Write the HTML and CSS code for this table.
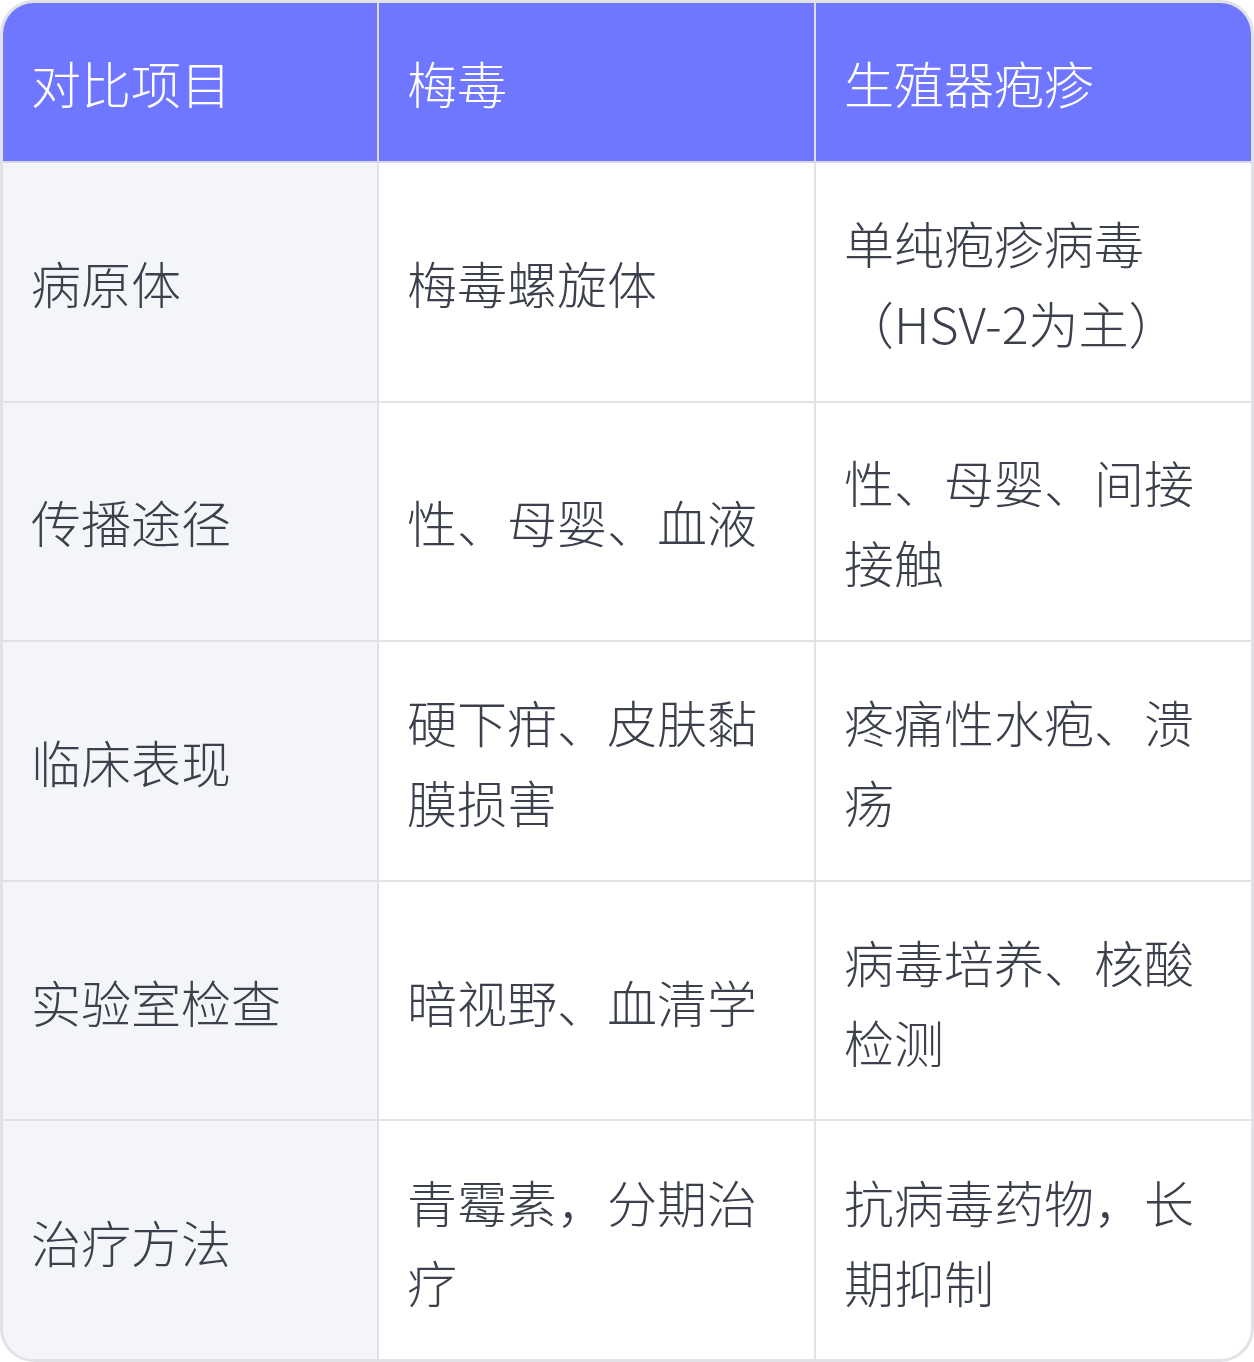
FILE: index.html
```html
<!DOCTYPE html>
<html lang="zh-CN">
<head>
<meta charset="utf-8">
<title>梅毒与生殖器疱疹对比</title>
<link rel="stylesheet" href="styles.css">
</head>
<body>
<div class="card">
  <table class="cmp">
    <colgroup>
      <col class="c1"><col class="c2"><col class="c3">
    </colgroup>
    <thead>
      <tr><th>对比项目</th><th>梅毒</th><th>生殖器疱疹</th></tr>
    </thead>
    <tbody>
      <tr><td>病原体</td><td>梅毒螺旋体</td><td>单纯疱疹病毒（HSV-2为主）</td></tr>
      <tr><td>传播途径</td><td>性、母婴、血液</td><td>性、母婴、间接接触</td></tr>
      <tr><td>临床表现</td><td>硬下疳、皮肤黏膜损害</td><td>疼痛性水疱、溃疡</td></tr>
      <tr><td>实验室检查</td><td>暗视野、血清学</td><td>病毒培养、核酸检测</td></tr>
      <tr><td>治疗方法</td><td>青霉素，分期治疗</td><td>抗病毒药物，长期抑制</td></tr>
    </tbody>
  </table>
</div>
</body>
</html>
```
FILE: styles.css
```css
html, body {
  margin: 0;
  padding: 0;
  background: #ffffff;
}
.card {
  width: 1254px;
  height: 1362px;
  box-sizing: border-box;
  border: 3px solid #e1e2e6;
  border-radius: 34px;
  overflow: hidden;
  background: #ffffff;
}
.cmp {
  width: 1248px;
  border-collapse: separate;
  border-spacing: 0;
  table-layout: fixed;
  font-family: "Noto Sans CJK SC Light", "Noto Sans CJK SC DemiLight", "Noto Sans CJK SC", "Noto Sans", sans-serif;
  font-weight: 300;
  font-size: 50px;
  line-height: 80px;
  color: #3b404c;
}
.c1 { width: 376px; }
.c2 { width: 437px; }
.c3 { width: 435px; }
.cmp th,
.cmp td {
  text-align: left;
  vertical-align: middle;
  padding: 0 28px;
  box-sizing: border-box;
  line-break: strict;
}
.cmp th {
  height: 160px;
  background: #6f76ff;
  color: #ffffff;
  font-weight: 300;
  border-bottom: 2px solid #d6d8f3;
  border-right: 2px solid #dcdde6;
}
.cmp td {
  height: 239.6px;
  border-right: 2px solid #e1e2e6;
  border-bottom: 2px solid #e1e2e6;
}
.cmp th:last-child,
.cmp td:last-child {
  border-right: none;
}
.cmp tbody tr:last-child td {
  border-bottom: none;
}
.cmp td:first-child {
  background: #f4f5f9;
}
```
